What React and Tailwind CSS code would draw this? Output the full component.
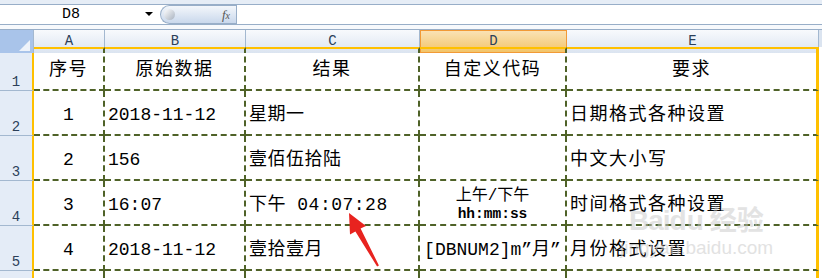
import React from "react";

const cols = "grid-cols-[34px_71px_141px_174px_147px_252px_3px]";
const cellFont = { fontFamily: '"Liberation Mono", "Noto Sans CJK SC", monospace' };

const rows = [
  { n: "2", a: "1", b: "2018-11-12", c: "星期一", d: "", e: "日期格式各种设置" },
  { n: "3", a: "2", b: "156", c: "壹佰伍拾陆", d: "", e: "中文大小写" },
  { n: "4", a: "3", b: "16:07", c: "下午 04:07:28", d: "time", e: "时间格式各种设置" },
  { n: "5", a: "4", b: "2018-11-12", c: "壹拾壹月", d: "[DBNUM2]m\u201d月\u201d", e: "月份格式设置" },
];

function ColHead({ label, active }) {
  return (
    <div
      className={
        active
          ? "flex items-center justify-center border border-[#f29a36] bg-gradient-to-b from-[#fae2b4] to-[#f2c469] text-[14px] text-[#2b3f59]"
          : "flex items-center justify-center border-r border-[#a3b8d0] bg-gradient-to-b from-[#f8fafd] to-[#dbe4f0] text-[14px] text-[#2b3f59]"
      }
      style={{ fontFamily: '"Liberation Mono", monospace' }}
    >
      {label}
    </div>
  );
}

function RowHead({ n }) {
  return (
    <div
      className="flex items-end justify-center border-b border-r-2 border-b-[#a3b8d0] border-r-[#ffc000] bg-[#e4ecf7] pb-[1px] text-[14px] leading-none text-[#2b3f59]"
      style={{ fontFamily: '"Liberation Mono", monospace' }}
    >
      {n}
    </div>
  );
}

const dash = "border-b-2 border-r-2 border-dashed border-[#4f6228]";

export default function App() {
  return (
    <div className="relative h-[278px] w-[822px] overflow-hidden bg-white">
      {/* formula bar */}
      <div className="h-[29px] bg-[#e6edf6] pt-[4px]">
        <div className="flex h-[25px] flex-col border-t border-[#98aec8] bg-white">
          <div className="flex h-[19px] items-stretch">
            <div className="relative flex w-[160px] items-center">
              <span
                className="ml-[62px] text-[15px] leading-none text-black"
                style={{ fontFamily: '"Liberation Mono", monospace' }}
              >
                D8
              </span>
              <span className="absolute left-[145px] top-[7px] h-0 w-0 border-x-[4px] border-t-[4px] border-x-transparent border-t-black" />
            </div>
            <div className="relative flex w-[76px] items-center justify-end rounded-l-full border border-r-0 border-[#98aec8] bg-gradient-to-b from-[#f4f7fb] to-[#c9d8ec] pr-[6px]">
              <span className="absolute left-[3px] top-[3px] h-[11px] w-[11px] rounded-full bg-gradient-to-br from-white to-[#a8b2bf]" />
              <span
                className="text-[13px] italic leading-none text-[#555]"
                style={{ fontFamily: '"Liberation Serif", serif' }}
              >
                f<span className="text-[10px]">x</span>
              </span>
            </div>
            <div className="flex-1 border-l border-[#98aec8]" />
          </div>
          <div className="flex-1 border-t border-[#98aec8] bg-[#f7f9fc]" />
        </div>
      </div>

      {/* column headers */}
      <div className={`grid h-[18px] border-t border-[#98aec8] ${cols}`}>
        <div className="relative border-r border-[#a3b8d0] bg-[#a9c4ea]">
          <span className="absolute bottom-[2px] right-[3px] h-0 w-0 border-b-[11px] border-l-[11px] border-b-[#eef3fa] border-l-transparent" />
        </div>
        <ColHead label="A" />
        <ColHead label="B" />
        <ColHead label="C" />
        <ColHead label="D" active />
        <ColHead label="E" />
        <div className="bg-[#dbe4f0]" />
      </div>

      {/* header row */}
      <div className={`grid h-[44px] ${cols}`} style={cellFont}>
        <div
          className="flex items-end justify-center border-b border-r-2 border-b-[#a3b8d0] border-r-[#ffc000] bg-[#e4ecf7] pb-[1px] text-[14px] leading-none text-[#2b3f59]"
          style={{ fontFamily: '"Liberation Mono", monospace' }}
        >
          1
        </div>
        {["序号", "原始数据", "结果", "自定义代码", "要求"].map((t, i) => (
          <div
            key={t}
            className={`flex items-center justify-center border-t-2 border-t-[#ffc000] pt-[3px] text-[18px] tracking-[1.5px] text-black ${
              i === 4
                ? "border-b-2 border-r-[3px] border-dashed border-b-[#4f6228] border-r-[#ffc000]"
                : dash
            }`}
            style={
              i === 4
                ? { borderRightStyle: "solid", borderTopStyle: "solid" }
                : { borderTopStyle: "solid" }
            }
          >
            {t}
          </div>
        ))}
        <div className="bg-white" />
      </div>

      {/* data rows */}
      {rows.map((r) => (
        <div key={r.n} className={`grid h-[45px] ${cols}`} style={cellFont}>
          <RowHead n={r.n} />
          <div className={`flex items-center justify-center pt-[5px] text-[18px] text-black ${dash}`}>{r.a}</div>
          <div className={`flex items-center pl-[3px] pt-[5px] text-[18px] text-black ${dash}`}>{r.b}</div>
          <div className={`flex items-center pl-[3px] pt-[5px] text-[18px] tracking-[0.5px] text-black ${dash}`}>
            {r.c}
          </div>
          <div className={`flex items-center justify-center pt-[5px] text-[18px] text-black ${dash}`}>
            {r.d === "time" ? (
              <div className="flex flex-col items-center leading-none">
                <span className="text-[16px]">上午/下午</span>
                <span className="mt-[3px] text-[14.5px] font-bold">hh:mm:ss</span>
              </div>
            ) : (
              <span className="whitespace-nowrap text-[18px]">{r.d}</span>
            )}
          </div>
          <div
            className="flex items-center border-b-2 border-r-[3px] border-dashed border-b-[#4f6228] border-r-[#ffc000] pl-[3px] pt-[5px] text-[18px] tracking-[1.5px] text-black"
            style={{ borderRightStyle: "solid" }}
          >
            {r.e}
          </div>
          <div className="bg-white" />
        </div>
      ))}

      {/* partial row 6 */}
      <div className={`grid h-[10px] ${cols}`}>
        <div className="border-r-2 border-r-[#ffc000] bg-[#e4ecf7]" />
        <div className="border-r-2 border-dashed border-[#4f6228]" />
        <div className="border-r-2 border-dashed border-[#4f6228]" />
        <div className="border-r-2 border-dashed border-[#4f6228]" />
        <div className="border-r-2 border-dashed border-[#4f6228]" />
        <div className="border-r-[3px] border-[#ffc000]" />
        <div />
      </div>

      {/* watermark */}
      <div className="pointer-events-none absolute left-[629px] top-[207px] select-none text-[#c8c8c8] opacity-50">
        <div className="flex items-end leading-none" style={{ fontFamily: '"Liberation Sans", "Noto Sans CJK SC", sans-serif' }}>
          <span className="text-[28px] font-bold tracking-[-1px]">Bai</span>
          <span className="text-[28px] font-bold">du</span>
          <span className="ml-[6px] text-[27px] font-bold">经验</span>
        </div>
      </div>
      <div
        className="pointer-events-none absolute left-[620px] top-[238px] select-none text-[19px] leading-none text-[#cfcfcf] opacity-60"
        style={{ fontFamily: '"Liberation Sans", sans-serif' }}
      >
        jingyan.baidu.com
      </div>

      {/* red arrow */}
      <svg className="pointer-events-none absolute left-0 top-0" width="822" height="278">
        <polygon
          points="349,213 366,226 360.6,228.5 378.9,265.5 377.1,266.5 355.4,231.5 350,234.5"
          fill="#e8231f"
        />
      </svg>
    </div>
  );
}
